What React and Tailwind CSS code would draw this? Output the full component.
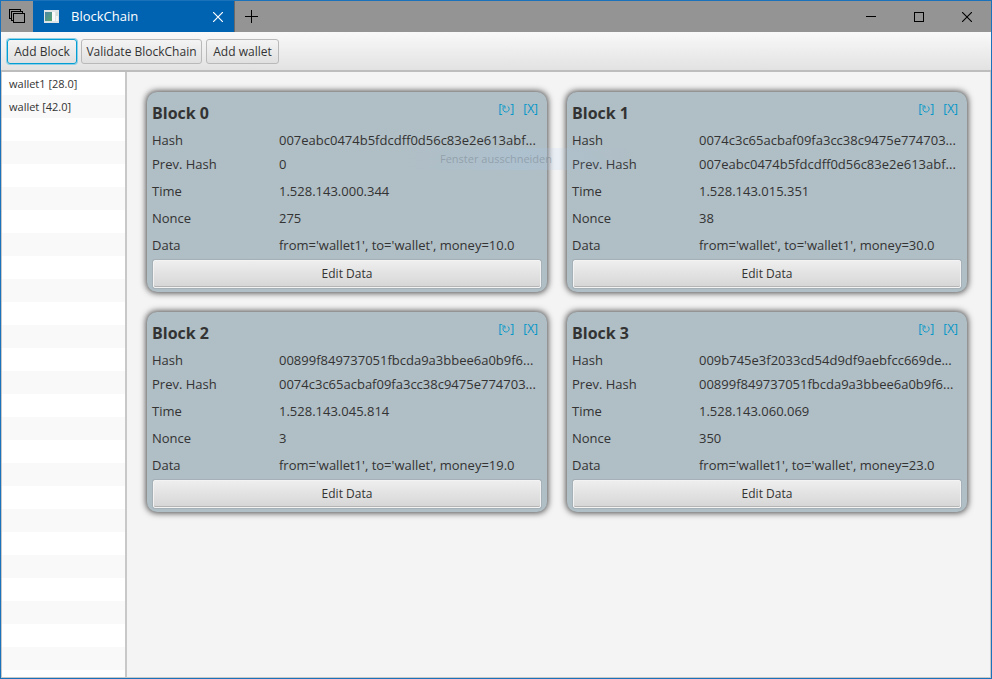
import React from "react";

const wallets = ["wallet1 [28.0]", "wallet [42.0]"];
const listRows = Array.from({ length: 27 }, (_, i) => wallets[i] || "");

const blocks = [
  {
    title: "Block 0",
    hash: "007eabc0474b5fdcdff0d56c83e2e613abf...",
    prev: "0",
    time: "1.528.143.000.344",
    nonce: "275",
    data: "from='wallet1', to='wallet', money=10.0",
  },
  {
    title: "Block 1",
    hash: "0074c3c65acbaf09fa3cc38c9475e774703...",
    prev: "007eabc0474b5fdcdff0d56c83e2e613abf...",
    time: "1.528.143.015.351",
    nonce: "38",
    data: "from='wallet', to='wallet1', money=30.0",
  },
  {
    title: "Block 2",
    hash: "00899f849737051fbcda9a3bbee6a0b9f6...",
    prev: "0074c3c65acbaf09fa3cc38c9475e774703...",
    time: "1.528.143.045.814",
    nonce: "3",
    data: "from='wallet1', to='wallet', money=19.0",
  },
  {
    title: "Block 3",
    hash: "009b745e3f2033cd54d9df9aebfcc669de...",
    prev: "00899f849737051fbcda9a3bbee6a0b9f6...",
    time: "1.528.143.060.069",
    nonce: "350",
    data: "from='wallet1', to='wallet', money=23.0",
  },
];

function TitleBar() {
  return (
    <header className="flex h-[31px] shrink-0 items-stretch bg-[#949494]">
      <button type="button" aria-label="Tabs" className="w-8 pl-2">
        <svg width="17" height="15" viewBox="0 0 17 15" fill="none" stroke="#000" shapeRendering="crispEdges">
          <path d="M2.5 9.5h-2v-9h11v2M4.5 11.5h-2v-9h11v2" />
          <rect x="4.5" y="4.5" width="11" height="9" />
        </svg>
      </button>
      <div className="flex w-[202px] items-center border-r border-[#686868] bg-[#0063b1] pl-[11px] text-[13px] text-white">
        <svg width="15" height="13" viewBox="0 0 15 13" aria-hidden="true">
          <defs>
            <linearGradient id="pane" x1="0" y1="0" x2="1" y2="1">
              <stop offset="0" stopColor="#4a86a8" />
              <stop offset="1" stopColor="#5aa56c" />
            </linearGradient>
          </defs>
          <rect width="15" height="13" fill="#dfe4e6" />
          <rect x="1" y="2" width="7" height="9" fill="url(#pane)" />
          <rect x="8" y="2" width="3" height="9" fill="#fafafa" />
          <rect x="12" y="2" width="2" height="9" fill="#f6f6f6" />
          <rect x="12" y="2" width="2" height="4" fill="#d3dfd9" />
        </svg>
        <span className="ml-3 flex-1">BlockChain</span>
        <button type="button" aria-label="Close tab" className="mr-[11px]">
          <svg width="10" height="10" viewBox="0 0 10 10" stroke="#fff" strokeWidth="1.2">
            <path d="M0 0l10 10M10 0L0 10" />
          </svg>
        </button>
      </div>
      <button type="button" aria-label="New tab" className="w-8 pl-[10px]">
        <svg width="13" height="13" viewBox="0 0 13 13" stroke="#000" shapeRendering="crispEdges">
          <path d="M6.5 0v13M0 6.5h13" />
        </svg>
      </button>
      <div className="ml-auto flex">
        <button type="button" aria-label="Minimize" className="flex w-12 items-center justify-center">
          <svg width="10" height="10" viewBox="0 0 10 10" stroke="#000" shapeRendering="crispEdges">
            <path d="M0 4.5h10" />
          </svg>
        </button>
        <button type="button" aria-label="Maximize" className="flex w-12 items-center justify-center">
          <svg width="10" height="10" viewBox="0 0 10 10" fill="none" stroke="#000" shapeRendering="crispEdges">
            <rect x="0.5" y="0.5" width="9" height="9" />
          </svg>
        </button>
        <button type="button" aria-label="Close" className="flex w-12 items-center justify-center">
          <svg width="10" height="10" viewBox="0 0 10 10" stroke="#000" strokeWidth="1.1">
            <path d="M0 0l10 10M10 0L0 10" />
          </svg>
        </button>
      </div>
    </header>
  );
}

function ToolButton({ children, className }) {
  return (
    <button
      type="button"
      className={
        "flex h-[25px] items-center justify-center rounded-[3px] border bg-gradient-to-b from-[#f4f4f4] to-[#e0e0e0] text-[12px] whitespace-nowrap " +
        className
      }
    >
      {children}
    </button>
  );
}

function Field({ label, value, tall }) {
  return (
    <div className={tall ? "flex h-[27px] items-center" : "flex h-6 items-center"}>
      <dt className="w-[127px] shrink-0">{label}</dt>
      <dd className="whitespace-nowrap">{value}</dd>
    </div>
  );
}

function BlockCard({ block }) {
  return (
    <article className="h-[200px] w-[400px] rounded-[10px] bg-[#b0bec5] px-[5px] pt-[5px] shadow-[0_0_6px_1px_rgba(0,0,0,0.7)]">
      <div className="flex h-8 justify-between">
        <h2 className="text-[16px] leading-[32px] font-bold">{block.title}</h2>
        <div className="flex gap-[9px] pr-1 text-[12px] text-[#0096c9]">
          <button type="button" aria-label={"Refresh " + block.title} className="flex h-6 items-center">
            [
            <svg width="8" height="8" viewBox="0 0 8 8" fill="none" stroke="currentColor" strokeWidth="0.9">
              <path d="M5.6 1.2A3.1 3.1 0 1 1 2 1.6M0.2 1H3V3.6" />
            </svg>
            ]
          </button>
          <button type="button" aria-label={"Remove " + block.title} className="flex h-6 items-center">
            [X]
          </button>
        </div>
      </div>
      <dl className="text-[13px]">
        <Field label="Hash" value={block.hash} />
        <Field label="Prev. Hash" value={block.prev} />
        <div className="pt-px">
          <Field label="Time" value={block.time} tall />
          <Field label="Nonce" value={block.nonce} tall />
          <Field label="Data" value={block.data} tall />
        </div>
      </dl>
      <div className="px-px pt-px">
        <button
          type="button"
          className="h-7 w-full rounded-[2px] border border-[#f3f3f3] bg-gradient-to-b from-[#eeeeee] to-[#d6d6d6] text-[12px] shadow-[inset_0_-1px_0_#b4b4b4,0_0_0_1px_#a5b1b7]"
        >
          Edit Data
        </button>
      </div>
    </article>
  );
}

export default function App() {
  return (
    <div className="relative flex h-screen flex-col overflow-hidden border border-[#1a72bb] bg-[#f4f4f4] font-['Open_Sans','Noto_Sans',sans-serif] text-[#333333]">
      <TitleBar />
      <div className="flex h-10 shrink-0 gap-1 border-b-2 border-[#bdbdbd] bg-gradient-to-b from-[#f9f9f9] to-[#e2e2e2] px-1.5 pt-[7px]">
        <ToolButton className="w-[70px] border-[#039ed3] shadow-[0_0_0_1px_#8fcfe6]">Add Block</ToolButton>
        <ToolButton className="w-[121px] border-[#b9b9b9]">Validate BlockChain</ToolButton>
        <ToolButton className="w-[73px] border-[#b9b9b9]">Add wallet</ToolButton>
      </div>
      <div className="flex min-h-0 flex-1 border-x border-b border-[#c8c8c8]">
        <ul className="w-[125px] shrink-0 overflow-hidden border-r-2 border-[#c8c8c8] bg-white text-[11px]">
          {listRows.map((name, i) => (
            <li key={i} className="h-[23px] pl-[7px] leading-[23px] odd:bg-white even:bg-[#f9f9f9]">
              {name}
            </li>
          ))}
        </ul>
        <main className="flex flex-1 flex-wrap content-start gap-5 p-5 pr-0">
          {blocks.map((block) => (
            <BlockCard key={block.title} block={block} />
          ))}
        </main>
      </div>
      <div className="pointer-events-none absolute top-[147px] left-[399px] h-[22px] w-[240px] bg-gradient-to-r from-transparent via-[#a4ccf4]/20 to-transparent pl-10 text-[11px] leading-[22px] text-[#7d8b96]/60">
        Fenster ausschneiden
      </div>
    </div>
  );
}
